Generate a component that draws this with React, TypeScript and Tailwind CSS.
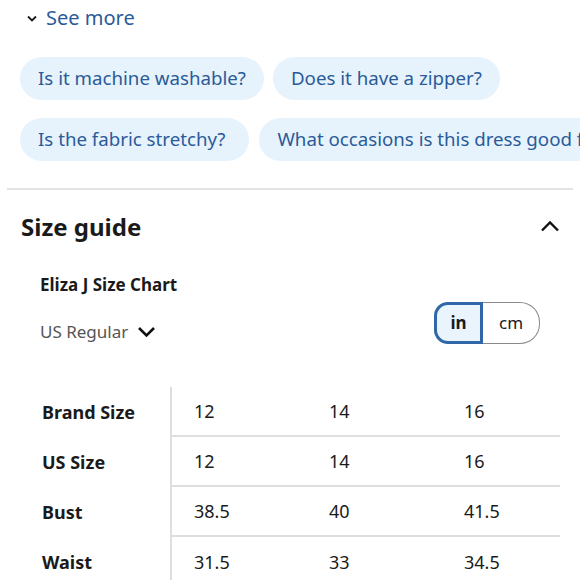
import React from "react";

const rows = [
  { label: "Brand Size", vals: ["12", "14", "16"] },
  { label: "US Size", vals: ["12", "14", "16"] },
  { label: "Bust", vals: ["38.5", "40", "41.5"] },
  { label: "Waist", vals: ["31.5", "33", "34.5"] },
];

function Chip({ text, wide }: { text: string; wide?: boolean }) {
  return (
    <div className={`shrink-0 h-[43px] flex items-center pl-[18px] ${wide ? "pr-[24px]" : "pr-[18px]"} rounded-full bg-[#e6f2fc] text-[#2a5b98] text-[18.7px] whitespace-nowrap`}>
      {text}
    </div>
  );
}

export default function App() {
  return (
    <div className="w-[580px] h-[580px] overflow-hidden bg-white text-[#1a1a1a]" style={{ fontFamily: '"Noto Sans", sans-serif' }}>
      <div className="flex items-center h-[36px] pl-[27px] gap-[9px] text-[#2a5b98]">
        <svg width="10" height="7" viewBox="0 0 10 7" className="mt-[1px]">
          <path d="M1 1.5 L5 5.5 L9 1.5" stroke="#1a1a1a" strokeWidth="1.8" fill="none" />
        </svg>
        <span className="text-[20px]">See more</span>
      </div>
      <div className="pl-[20px] pt-[21px] flex flex-col gap-[18px] overflow-hidden">
        <div className="flex gap-[9px]">
          <Chip text="Is it machine washable?" />
          <Chip text="Does it have a zipper?" />
        </div>
        <div className="flex gap-[10px]">
          <Chip text="Is the fabric stretchy?" wide />
          <Chip text="What occasions is this dress good for?" />
        </div>
      </div>
      <div className="mx-[7px] mt-[27px] h-[2px] bg-[#e3e3e3]" />
      <div className="flex items-center justify-between pl-[21px] pr-[20px] pt-[19px]">
        <span className="text-[24px] font-bold">Size guide</span>
        <svg width="20" height="12" viewBox="0 0 20 12" className="mt-[-2px]">
          <path d="M2 10.5 L10 2.5 L18 10.5" stroke="#111" strokeWidth="2.4" fill="none" />
        </svg>
      </div>
      <div className="pl-[40px] pr-[40px] pt-[29px] flex justify-between">
        <div className="flex flex-col">
          <span className="text-[17px] font-bold leading-[22px]">Eliza J Size Chart</span>
          <div className="flex items-center gap-[9px] mt-[25px] text-[#555] text-[17px] leading-[22px]">
            <span>US Regular</span>
            <svg width="19" height="12" viewBox="0 0 19 12">
              <path d="M2 2 L9.5 9.5 L17 2" stroke="#111" strokeWidth="2.6" fill="none" />
            </svg>
          </div>
        </div>
        <div className="flex mt-[28px] h-[42px]">
          <div className="w-[49px] flex items-center justify-center border-[3px] border-[#2f67a8] rounded-l-[14px] bg-[#eaf4fd] font-bold text-[17px]">in</div>
          <div className="w-[57px] flex items-center justify-center border border-l-0 border-[#8a8a8a] rounded-r-[20px] text-[17px]">cm</div>
        </div>
      </div>
      <div className="pl-[42px] mt-[43px]">
        {rows.map((r, i) => (
          <div key={r.label} className="flex h-[50px]">
            <div className="w-[128px] flex items-center font-bold text-[18px]">{r.label}</div>
            <div className={`flex border-l-2 border-[#dedede] ${i < rows.length - 1 ? "border-b-2" : ""} w-[390px]`}>
              {r.vals.map((v, j) => (
                <div key={j} className={`${j < 2 ? "w-[135px]" : "flex-1"} flex items-center pl-[22px] text-[18px]`}>{v}</div>
              ))}
            </div>
          </div>
        ))}
      </div>
    </div>
  );
}
